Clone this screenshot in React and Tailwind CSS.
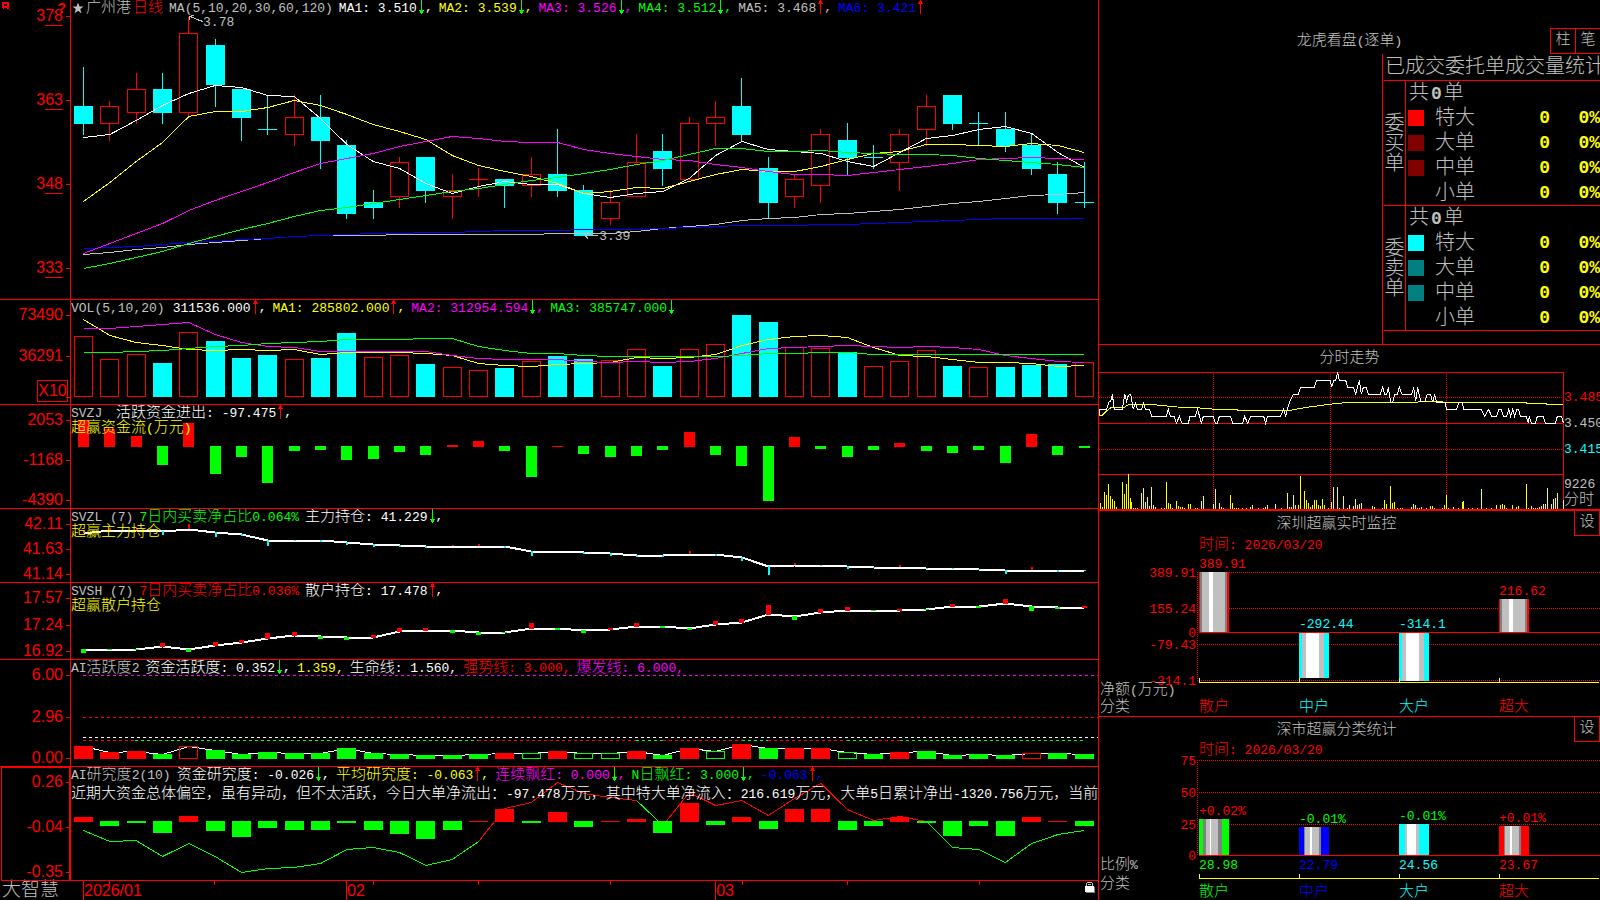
import { clsx } from 'clsx';

const RED = '#ff0000';
const GREEN = '#00ff00';
const CYAN = '#00ffff';
const YELLOW = '#ffff00';
const MAGENTA = '#ff00ff';
const BLUE = '#0000ff';
const SILVER = '#c0c0c0';
const GRAY = '#808080';
const WHITE = '#ffffff';

const colX = (i) => 83.5 + (i * 1000.5) / 38;
const colLeft = (i, w) => Math.floor(colX(i)) - (w - 1) / 2;

// [kind, high, low, body top, body bottom]; c = down day, r = up day
const CANDLES = [
  ['c', 67, 135, 106, 124], ['r', 101, 141, 106, 124], ['r', 73, 124, 89, 113], ['c', 73, 124, 89, 113],
  ['r', 17, 118, 33, 113], ['c', 39, 107, 45, 85], ['c', 89, 141, 89, 118], ['c', 95, 135, 129, 130],
  ['r', 95, 146, 117, 135], ['c', 95, 169, 117, 141], ['c', 140, 219, 145, 214], ['c', 190, 219, 202, 208],
  ['r', 157, 208, 162, 197], ['c', 157, 203, 157, 191], ['r', 174, 219, 190, 197], ['r', 168, 197, 179, 180],
  ['c', 179, 208, 179, 186], ['r', 157, 197, 174, 186], ['c', 129, 197, 174, 191], ['c', 185, 236, 190, 236],
  ['r', 190, 225, 202, 219], ['r', 134, 197, 162, 197], ['c', 134, 186, 151, 169], ['r', 117, 180, 123, 180],
  ['r', 101, 146, 117, 124], ['c', 78, 141, 106, 135], ['c', 157, 219, 168, 203], ['r', 174, 208, 179, 197],
  ['r', 129, 203, 134, 186], ['c', 123, 175, 140, 158], ['c', 145, 169, 157, 158], ['r', 129, 191, 134, 163],
  ['r', 95, 146, 106, 130], ['c', 95, 130, 95, 124], ['c', 112, 146, 123, 124], ['c', 112, 152, 129, 146],
  ['c', 134, 175, 145, 169], ['c', 162, 214, 174, 203], ['c', 162, 208, 202, 203],
];

const MA5 = [137, 134, 120, 105, 93, 85, 87, 95, 96, 118, 144, 161, 168, 183, 193, 186, 181, 184, 184, 193, 197, 193, 191, 178, 155, 141, 149, 151, 153, 161, 166, 152, 138, 135, 129, 126, 133, 152, 167];
const MA10 = [201, 182, 161, 142, 116, 111, 111, 107, 100, 105, 114, 124, 131, 139, 155, 165, 171, 176, 183, 193, 191, 187, 188, 181, 174, 169, 171, 171, 166, 159, 153, 151, 144, 144, 145, 146, 143, 145, 152];
const MA20 = [253, 243, 233, 223, 210, 200, 191, 182, 172, 163, 158, 153, 146, 141, 136, 138, 141, 142, 142, 149, 153, 156, 159, 160, 164, 167, 171, 174, 174, 175, 172, 169, 166, 163, 159, 158, 157, 158, 159];
const MA30 = [268, 263, 257, 251, 243, 236, 229, 223, 216, 210, 207, 203, 199, 195, 191, 188, 184, 180, 177, 173, 169, 164, 160, 154, 148, 148, 151, 151, 150, 152, 153, 154, 154, 155, 158, 160, 162, 164, 167];
const MA60 = [254, 252, 249, 247, 244, 242, 240, 238, 236, 235, 235, 235, 234, 234, 234, 234, 234, 234, 233, 233, 233, 231, 228, 226, 224, 220, 218, 217, 214, 213, 211, 209, 206, 203, 201, 198, 195, 194, 192];
const MA120 = [248, 247, 246, 244, 242, 241, 239, 238, 236, 235, 234, 233, 233, 232, 232, 231, 230, 230, 230, 229, 229, 229, 228, 227, 226, 225, 225, 225, 224, 224, 223, 222, 221, 220, 219, 218, 218, 218, 218];

const VOL_KIND = 'rrrcrcccrccrrcrrcrccrrcrrccrrcrrrcrcccr';
const VOL_TOP = [336, 359, 354, 363, 332, 341, 358, 355, 359, 358, 333, 357, 355, 364, 367, 370, 368, 361, 356, 359, 360, 349, 366, 349, 344, 315, 322, 347, 348, 352, 366, 361, 350, 366, 367, 367, 365, 364, 362];
const VOL_MA1 = [319, 335, 342, 345, 349, 350, 349, 350, 349, 354, 352, 352, 352, 353, 355, 363, 365, 366, 364, 363, 362, 357, 358, 357, 354, 345, 339, 336, 335, 337, 347, 355, 356, 359, 362, 362, 363, 366, 365];
const VOL_MA2 = [328, 328, 326, 324, 322, 334, 342, 346, 347, 351, 351, 351, 351, 351, 355, 358, 359, 359, 359, 361, 362, 361, 362, 361, 358, 353, 348, 347, 346, 345, 346, 347, 346, 347, 349, 355, 358, 361, 362];
const VOL_MA3 = [352, 352, 351, 350, 348, 346, 345, 343, 342, 341, 339, 339, 339, 338, 338, 346, 350, 353, 353, 355, 356, 356, 356, 356, 356, 355, 353, 353, 352, 352, 354, 354, 354, 354, 354, 354, 354, 354, 354];

const FLOW = [27, 18, 11, -19, 24, -28, -11, -37, -5, -4, -14, -13, -6, -9, 2, 6, -5, -31, 1, -8, -11, -10, -4, 15, -9, -20, -55, 10, -3, -11, -4, 4, -5, -7, -4, -17, 13, -9, -2];

const MAIN_POS = [533, 530, 530, 531, 529, 532, 534, 540, 540, 540, 542, 544, 545, 546, 546, 546, 546, 551, 551, 552, 553, 555, 555, 554, 554, 557, 566, 565, 565, 566, 567, 567, 568, 568, 569, 570, 570, 570, 570];
const MAIN_MARK = [3, 2, 2, -4, 5, -5, -2, -6, -1, -2, -3, -3, -2, -2, 1, 2, -2, -5, 0, -2, -3, -2, -2, 3, -2, -4, -9, 2, -1, -3, -1, 2, -1, -1, -1, -4, 3, -2, -1];

const RETAIL_POS = [649, 649, 649, 646, 649, 645, 642, 638, 635, 636, 637, 637, 631, 630, 630, 632, 632, 628, 628, 630, 629, 626, 626, 628, 624, 622, 614, 616, 612, 610, 610, 610, 609, 606, 606, 603, 606, 607, 607];
const RETAIL_MARK = [-4, -1, -1, 4, -3, 4, 3, 6, 4, -3, -3, 3, 4, 3, -3, -3, -1, 6, -2, -3, 2, 4, -2, -2, 4, 4, 10, -4, 4, 4, -1, 2, -1, 3, -2, 5, -5, -2, 2];

// upper case = outlined bar
const ACTIVE_BARS = [
  ['r', 746], ['r', 752], ['r', 751], ['g', 754], ['R', 746], ['g', 750], ['g', 754], ['g', 752], ['g', 753], ['g', 753],
  ['g', 748], ['g', 753], ['g', 754], ['g', 755], ['g', 755], ['g', 754], ['r', 753], ['G', 753], ['r', 751], ['G', 753],
  ['G', 753], ['r', 751], ['g', 755], ['r', 748], ['G', 751], ['r', 744], ['g', 748], ['r', 748], ['r', 748], ['G', 752],
  ['g', 754], ['r', 752], ['g', 751], ['g', 755], ['g', 754], ['g', 755], ['R', 753], ['g', 753], ['g', 754],
];
const ACTIVE_DASHES = [
  [83, 135, RED], [135, 478, GREEN], [478, 636, RED], [636, 663, GREEN], [663, 742, RED], [742, 768, GREEN],
  [768, 847, RED], [847, 873, GREEN], [873, 900, RED], [900, 1083, GREEN],
];

const STUDY = [5, -5, -2, -12, 6, -10, -16, -7, -9, -9, -2, -9, -13, -18, -9, 1, 13, -2, 10, -6, 1, 3, -12, 19, -4, 5, -8, 13, 13, -9, -5, 5, -2, -15, -5, -15, 5, 1, -5];
const STUDY_LINE = [830, 841, 840, 856, 843, 856, 872, 868, 867, 863, 849, 847, 852, 865, 859, 841, 808, 802, 782, 793, 797, 800, 825, 792, 805, 800, 815, 798, 783, 809, 820, 816, 821, 847, 849, 862, 843, 834, 830];
const STUDY_SEGMENTS = [[0, 15, GREEN], [15, 21, RED], [21, 22, GREEN], [22, 32, RED], [32, 38, GREEN]];

// intraday chart, three units to the pixel
const PRICE = '28,226 30,208 50,208 56,187 62,184 67,163 73,208 97,208 104,163 110,184 115,166 122,163 130,208 136,190 143,208 155,208 161,190 166,208 178,208 185,229 229,229 235,208 241,229 253,229 259,250 268,229 276,250 295,250 300,229 316,229 323,208 334,250 340,229 370,229 376,250 382,250 388,229 421,229 428,250 458,250 464,229 473,250 482,229 521,229 527,250 532,229 572,229 580,208 587,229 598,187 610,163 625,163 632,142 673,142 680,121 721,121 725,142 731,121 737,121 743,97 748,121 767,121 773,142 790,142 797,163 808,121 814,163 820,142 829,142 835,163 871,163 878,142 884,163 890,163 895,142 902,187 908,187 914,163 922,163 928,142 936,163 965,163 971,142 977,184 983,142 992,184 1005,184 1012,163 1022,163 1028,187 1034,163 1040,187 1065,187 1070,208 1100,208 1106,187 1117,187 1121,208 1173,208 1184,229 1196,208 1205,229 1220,229 1226,208 1234,208 1240,229 1250,229 1256,208 1262,229 1268,208 1274,229 1280,208 1286,208 1291,229 1309,229 1315,250 1318,229 1324,250 1336,250 1342,229 1360,229 1366,250 1396,250 1402,229 1415,229 1420,248';
const AVERAGE = '28,226 38,225 52,211 64,202 103,202 116,193 180,193 262,201 330,204 376,208 475,211 600,211 650,202 740,190 790,187 980,187 990,184 1050,185 1070,187 1305,187 1312,190 1365,190 1372,193 1420,193';
const TICKS = [
  [31, 489], [37, 501], [43, 456], [49, 465], [55, 432], [61, 468], [67, 477], [73, 483], [79, 501], [97, 426], [103, 462], [109, 432],
  [115, 402], [121, 474], [124, 486], [130, 504], [136, 504], [142, 504], [154, 459], [160, 444], [166, 486], [172, 471], [178, 498],
  [184, 441], [190, 495], [196, 501], [214, 504], [223, 504], [229, 426], [235, 489], [241, 492], [247, 504], [259, 483], [265, 498],
  [271, 501], [277, 501], [283, 504], [295, 492], [301, 492], [316, 504], [322, 504], [334, 483], [340, 468], [370, 492], [376, 447],
  [388, 489], [394, 501], [400, 504], [421, 465], [427, 489], [433, 504], [439, 504], [445, 504], [457, 504], [469, 504], [481, 501],
  [487, 495], [505, 504], [520, 504], [526, 501], [532, 495], [556, 492], [574, 504], [592, 459], [598, 501], [604, 501], [610, 465],
  [616, 495], [625, 495], [631, 408], [643, 453], [649, 480], [655, 489], [661, 501], [667, 495], [673, 480], [679, 480], [685, 495],
  [691, 498], [697, 477], [703, 495], [715, 504], [724, 486], [730, 441], [742, 441], [748, 504], [760, 468], [772, 504], [778, 495],
  [790, 498], [796, 477], [802, 495], [808, 492], [814, 489], [847, 498], [853, 501], [877, 504], [883, 480], [889, 492], [901, 438],
  [907, 489], [913, 486], [922, 504], [931, 504], [937, 504], [964, 501], [970, 492], [976, 495], [982, 504], [988, 504], [994, 501],
  [1009, 504], [1021, 498], [1027, 498], [1033, 504], [1057, 504], [1063, 495], [1069, 465], [1075, 504], [1090, 501], [1105, 504],
  [1117, 486], [1120, 483], [1135, 504], [1147, 504], [1162, 504], [1174, 447], [1190, 504], [1205, 504], [1219, 495], [1231, 495],
  [1237, 492], [1243, 495], [1249, 504], [1267, 495], [1279, 501], [1285, 498], [1309, 432], [1315, 504], [1324, 498], [1330, 504],
  [1336, 504], [1342, 504], [1348, 501], [1354, 498], [1360, 492], [1366, 492], [1372, 444], [1384, 492], [1390, 477], [1396, 474],
  [1402, 459], [1420, 480],
];

const runs = (text) => text.match(/[\x20-\x7e]+|[^\x20-\x7e]+/g) || [];
const isLatin = (s) => s.charCodeAt(0) < 127;

// Latin runs are set smaller than the Chinese ones so that they stay half width
function Mixed({ children }) {
  return runs(children).map((s, i) => (
    <span key={i} className={isLatin(s) ? 'text-[13px]' : 'text-[15px]'}>{s}</span>
  ));
}

function ChartText({ x, y, fill, anchor, children }) {
  return (
    <text x={x} y={y} fill={fill} textAnchor={anchor}>
      {runs(children).map((s, i) => (
        <tspan key={i} className={isLatin(s) ? 'text-[13px]' : 'text-[15px]'}>{s}</tspan>
      ))}
    </text>
  );
}

function Arrow({ up }) {
  return (
    <svg viewBox="0 0 8 14" className="w-2 h-3.5 shrink-0" shapeRendering="crispEdges" aria-hidden="true">
      {up ? (
        <path d="M4 0h1v14h-1zM3 1h3v2h-3zM2 3h5v1h-5z" fill={RED} />
      ) : (
        <path d="M4 0h1v14h-1zM3 11h3v2h-3zM2 10h5v1h-5z" fill={GREEN} />
      )}
    </svg>
  );
}

function Star() {
  return (
    <svg viewBox="0 0 24 24" className="w-3 h-3 mt-0.5 ml-px shrink-0" fill={SILVER} aria-hidden="true">
      <path d="M12 1l3 8h8l-6.500 5l2.500 9l-7-5.500l-7 5.500l2.500-9l-6.500-5h8z" />
    </svg>
  );
}

function Legend({ items, icon }) {
  return (
    <div className="flex gap-1.5 h-[15px] leading-4 whitespace-pre">
      {items.map(([text, tone, dir, tail = ','], i) => (
        <span key={i} className={clsx('flex shrink-0', tone)}>
          {i === 0 && icon}
          <span><Mixed>{text}</Mixed></span>
          {dir && <Arrow up={dir === 'up'} />}
          {dir && tail && <Mixed>{tail}</Mixed>}
        </span>
      ))}
    </div>
  );
}

function Axis({ labels, className, split, children }) {
  return (
    <div className={clsx('relative w-[71px] shrink-0 border-r border-[#ff0000] flex flex-col justify-between text-base text-[#ff0000]', className)}>
      {labels.map((l, i) => (
        <div key={i} className="relative h-3 leading-3 pr-[7px] text-right">
          {split ? (
            <>{l[0]}<span className="border-b border-[#ff0000] pb-px">{l.slice(1)}</span></>
          ) : l}
          <span className="absolute right-0 top-1/2 w-1 h-px bg-[#ff0000]" />
        </div>
      ))}
      {children}
    </div>
  );
}

function Plot({ top, height, overlay, className, children }) {
  return (
    <div className={clsx('relative flex-1 min-w-0 overflow-hidden', className)}>
      <svg
        className="absolute inset-0 w-full h-full"
        viewBox={`71 ${top} 1027 ${height}`}
        preserveAspectRatio="none"
        shapeRendering="crispEdges"
        fill="none"
      >
        {children}
      </svg>
      <div className="relative">{overlay}</div>
    </div>
  );
}

function Line({ data, color, width = 1, from = 0 }) {
  const points = data.map((y, i) => `${colX(i + from)},${y + 0.5}`).join(' ');
  return <polyline points={points} stroke={color} strokeWidth={width} />;
}

function Bar({ x, y, w, h, color, outline }) {
  return outline ? (
    <rect x={x + 0.5} y={y + 0.5} width={w - 1} height={Math.max(h - 1, 0)} stroke={color} />
  ) : (
    <rect x={x} y={y} width={w} height={h} fill={color} />
  );
}

function SignedBars({ data, zero, w, up, down }) {
  return data.map((v, i) => (
    <Bar
      key={i}
      x={colLeft(i, w)}
      y={v > 0 ? zero + 1 - v : zero}
      w={w}
      h={Math.abs(v)}
      color={v > 0 ? up : down}
    />
  ));
}

function Candle({ i, data: [kind, high, low, top, bottom] }) {
  const color = kind === 'c' ? CYAN : RED;
  const x = colLeft(i, 1);
  return (
    <g>
      <rect x={x} y={high} width={1} height={top - high} fill={color} />
      <rect x={x} y={bottom} width={1} height={low - bottom} fill={color} />
      <Bar x={x - 9} y={top} w={19} h={bottom - top} color={color} outline={kind === 'r' && bottom - top > 1} />
    </g>
  );
}

function MainPanel() {
  return (
    <section className="flex border-b border-[#ff0000] min-h-0">
      <Axis labels={['378', '363', '348', '333']} className="pt-[10px] pb-[25px]" split>
        <svg viewBox="0 0 8 8" className="absolute left-0.5 top-0.5 size-2" fill={RED} shapeRendering="crispEdges" aria-hidden="true">
          <path d="M0 0h7v6h-7zM2 2v2h3v-2zM1 6h1v1h-1zM5 6h2v1h-2zM7 7h1v1h-1z" fillRule="evenodd" />
        </svg>
        <b className="absolute right-1 top-0.5 text-sm leading-3 font-bold">?</b>
      </Axis>
      <Plot
        top={0}
        height={299}
        overlay={
          <Legend
            icon={<Star />}
            items={[
              ['广州港', 'gap-0.5 text-[#c0c0c0] -mr-1'],
              ['日线', 'text-[#ff0000]'],
              ['MA(5,10,20,30,60,120)', 'text-[#c0c0c0]'],
              ['MA1: 3.510', 'text-white', 'down'],
              ['MA2: 3.539', 'text-[#ffff00]', 'down'],
              ['MA3: 3.526', 'text-[#ff00ff]', 'down'],
              ['MA4: 3.512', 'text-[#00ff00]', 'down'],
              ['MA5: 3.468', 'text-[#c0c0c0]', 'up'],
              ['MA6: 3.421', 'text-[#0000ff]', 'up', ''],
            ]}
          />
        }
      >
        {CANDLES.map((c, i) => <Candle key={i} i={i} data={c} />)}
        <Line data={MA60} color={SILVER} />
        <Line data={MA120} color={BLUE} />
        <Line data={MA5} color={WHITE} />
        <Line data={MA10} color={YELLOW} />
        <Line data={MA20} color={MAGENTA} />
        <Line data={MA30} color={GREEN} />
        <path d="M189 16.5l4 1l4 2l6 2M189 16.5l1 4M189 16.5l5 -1" stroke={SILVER} />
        <ChartText x={203} y={26} fill={SILVER}>3.78</ChartText>
        <path d="M585 235.5h13M585 235.5l3 -3M585 235.5l3 3" stroke={SILVER} />
        <ChartText x={599} y={240} fill={SILVER}>3.39</ChartText>
      </Plot>
    </section>
  );
}

function VolumePanel() {
  return (
    <section className="flex border-b border-[#ff0000] min-h-0">
      <Axis labels={['73490', '36291', '']} className="pt-[9px] pb-px">
        <span className="absolute right-0.5 bottom-0.5 w-[31px] h-[22px] border border-[#ff0000] leading-5 text-center">X10</span>
      </Axis>
      <Plot
        top={300}
        height={104}
        overlay={
          <Legend
            items={[
              ['VOL(5,10,20)', 'text-[#c0c0c0] mr-0.5'],
              ['311536.000', 'text-white', 'up'],
              ['MA1: 285802.000', 'text-[#ffff00]', 'up'],
              ['MA2: 312954.594', 'text-[#ff00ff]', 'down'],
              ['MA3: 385747.000', 'text-[#00ff00]', 'down', ''],
            ]}
          />
        }
      >
        {VOL_TOP.map((y, i) => (
          <Bar
            key={i}
            x={colLeft(i, 19)}
            y={y}
            w={19}
            h={397 - y}
            color={VOL_KIND[i] === 'c' ? CYAN : RED}
            outline={VOL_KIND[i] === 'r'}
          />
        ))}
        <Line data={VOL_MA1} color={YELLOW} />
        <Line data={VOL_MA2} color={MAGENTA} />
        <Line data={VOL_MA3} color={GREEN} />
      </Plot>
    </section>
  );
}

function FlowPanel() {
  return (
    <section className="flex border-b border-[#ff0000] min-h-0">
      <Axis labels={['2053', '-1168', '-4390']} className="pt-[9px] pb-0.5" />
      <Plot
        top={405}
        height={103}
        overlay={
          <>
            <Legend
              items={[
                ['SVZJ ', 'text-[#c0c0c0]'],
                ['活跃资金进出: -97.475', 'text-white', 'up'],
              ]}
            />
            <p className="leading-4 text-[#ffff00]"><Mixed>超赢资金流(万元)</Mixed></p>
          </>
        }
      >
        <SignedBars data={FLOW} zero={446} w={11} up={RED} down={GREEN} />
      </Plot>
    </section>
  );
}

function MainHoldingPanel() {
  return (
    <section className="flex border-b border-[#ff0000] min-h-0">
      <Axis labels={['42.11', '41.63', '41.14']} className="pt-[9px] pb-0.5" />
      <Plot
        top={509}
        height={73}
        overlay={
          <>
            <Legend
              items={[
                ['SVZL (7)', 'text-[#c0c0c0]'],
                ['7日内买卖净占比0.064%', 'text-[#00ff00]'],
                ['主力持仓: 41.229', 'text-white', 'down'],
              ]}
            />
            <p className="leading-4 text-[#ffff00]"><Mixed>超赢主力持仓</Mixed></p>
          </>
        }
      >
        <Line data={MAIN_POS} color={WHITE} width={2} />
        {MAIN_MARK.map((v, i) => (
          <rect
            key={i}
            x={colLeft(i, 1)}
            y={v > 0 ? MAIN_POS[i] - v : MAIN_POS[i]}
            width={2}
            height={Math.abs(v)}
            fill={v > 0 ? RED : CYAN}
          />
        ))}
      </Plot>
    </section>
  );
}

function RetailHoldingPanel() {
  return (
    <section className="flex border-b border-[#ff0000] min-h-0">
      <Axis labels={['17.57', '17.24', '16.92']} className="pt-[9px] pb-0.5" />
      <Plot
        top={583}
        height={76}
        overlay={
          <>
            <Legend
              items={[
                ['SVSH (7)', 'text-[#c0c0c0]'],
                ['7日内买卖净占比0.036%', 'text-[#ff0000]'],
                ['散户持仓: 17.478', 'text-white', 'up'],
              ]}
            />
            <p className="leading-4 text-[#ffff00]"><Mixed>超赢散户持仓</Mixed></p>
          </>
        }
      >
        <Line data={RETAIL_POS} color={WHITE} width={2} />
        {RETAIL_MARK.map((v, i) => (
          <rect
            key={i}
            x={colLeft(i, 5)}
            y={v > 0 ? RETAIL_POS[i] + 1 - v : RETAIL_POS[i]}
            width={5}
            height={Math.abs(v)}
            fill={v > 0 ? RED : GREEN}
          />
        ))}
      </Plot>
    </section>
  );
}

function ActivityPanel() {
  return (
    <section className="flex border-b border-[#ff0000] min-h-0">
      <Axis labels={['6.00', '2.96', '0.00']} className="pt-[9px] pb-0.5" />
      <Plot
        top={660}
        height={106}
        overlay={
          <Legend
            items={[
              ['AI活跃度2', 'text-[#c0c0c0]'],
              ['资金活跃度: 0.352', 'text-white', 'down'],
              ['1.359,', 'text-[#ffff00]'],
              ['生命线: 1.560,', 'text-white'],
              ['强势线: 3.000,', 'text-[#ff0000]'],
              ['爆发线: 6.000,', 'text-[#ff00ff]'],
            ]}
          />
        }
      >
        <path d="M83 675.5H1098" stroke={MAGENTA} strokeDasharray="3 3" />
        <path d="M83 717.5H1098" stroke={RED} strokeDasharray="3 3" />
        <path d="M83 737.5H1098" stroke={WHITE} strokeDasharray="3 3" />
        {ACTIVE_DASHES.map(([a, b, color]) => (
          <path key={a} d={`M${a} 740.5H${b}`} stroke={color} strokeDasharray="3 3" />
        ))}
        <Line data={ACTIVE_BARS.map((b) => b[1])} color={WHITE} />
        {ACTIVE_BARS.map(([kind, y], i) => {
          const outline = kind === kind.toUpperCase();
          const color = kind.toLowerCase() === 'r' ? RED : GREEN;
          return <Bar key={i} x={colLeft(i, 19)} y={y} w={19} h={759 - y} color={color} outline={outline} />;
        })}
      </Plot>
    </section>
  );
}

function StudyPanel() {
  return (
    <section className="flex min-h-0">
      <Axis labels={['0.26', '-0.04', '-0.35']} className="pt-[9px] pb-[3px]">
        <span className="absolute inset-y-0 left-px right-0 border border-[#ff0000]" />
      </Axis>
      <Plot
        top={767}
        height={113}
        className="border-b border-[#ff0000]"
        overlay={
          <>
            <Legend
              items={[
                ['AI研究度2(10)', 'text-[#c0c0c0]'],
                ['资金研究度: -0.026', 'text-white', 'down'],
                ['平均研究度: -0.063', 'text-[#ffff00]', 'up'],
                ['连续飘红: 0.000', 'text-[#ff00ff]', 'down'],
                ['N日飘红: 3.000', 'text-[#00ff00]', 'down'],
                ['-0.063', 'text-[#0000ff]', 'up'],
              ]}
            />
            <p className="mt-1 leading-4 whitespace-nowrap text-white">
              <Mixed>近期大资金总体偏空，虽有异动，但不太活跃，今日大单净流出：-97.478万元，其中特大单净流入：216.619万元，大单5日累计净出-1320.756万元，当前</Mixed>
            </p>
          </>
        }
      >
        {STUDY_SEGMENTS.map(([a, b, color]) => (
          <Line key={a} data={STUDY_LINE.slice(a, b + 1)} from={a} color={color} />
        ))}
        <SignedBars data={STUDY} zero={821} w={19} up={RED} down={GREEN} />
      </Plot>
    </section>
  );
}

function DateAxis() {
  return (
    <footer className="flex min-h-0">
      <div className="w-[71px] shrink-0 pl-0.5 text-[19px] leading-5 whitespace-nowrap text-[#c0c0c0]">大智慧</div>
      <div className="relative flex-1 min-w-0">
        <svg className="absolute inset-0 w-full h-full" viewBox="71 881 1027 19" preserveAspectRatio="none" shapeRendering="crispEdges">
          {[83, 346, 715].map((x) => <rect key={x} x={x} y={881} width={1} height={19} fill={RED} />)}
          {[109, 214, 373, 478, 610, 742, 847, 979].map((x) => <rect key={x} x={x} y={881} width={1} height={4} fill={RED} />)}
          <g className="font-['Liberation_Sans'] text-base" fill={RED}>
            <text x={84} y={896}>2026/01</text>
            <text x={347} y={896}>02</text>
            <text x={716} y={896}>03</text>
          </g>
          <path d="M1087 882h5v1h-5zM1086 883h1v3h-1zM1092 883h1v3h-1zM1088 884h3v1h-3z" fill={SILVER} />
          <path d="M1086 892h9v1h-9zM1094 887h1v6h-1z" fill={GRAY} />
          <path d="M1085 886h9v6h-9z" fill={WHITE} />
        </svg>
      </div>
    </footer>
  );
}

const ORDER_SIDES = [
  { name: '委买单', swatches: ['bg-[#ff0000]', 'bg-[#800000]', 'bg-[#800000]', ''] },
  { name: '委卖单', swatches: ['bg-[#00ffff]', 'bg-[#008080]', 'bg-[#008080]', ''] },
];
const ORDER_SIZES = ['特大', '大单', '中单', '小单'];

function OrderTable() {
  return (
    <table className="w-full border-separate border-spacing-0 border-b border-[#ff0000] text-xl text-[#c0c0c0]">
      {ORDER_SIDES.map((side) => (
        <tbody key={side.name}>
          <tr className="h-[25px] leading-5">
            <th rowSpan={5} scope="rowgroup" className="w-[22px] border-t border-r border-[#ff0000] p-0 pt-1 font-light align-middle">
              {side.name.split('').map((c) => <span key={c} className="block">{c}</span>)}
            </th>
            <td colSpan={4} className="border-t border-[#ff0000] p-0 pt-0.5 pl-[3px]">
              共<b className="px-0.5 text-lg leading-5 font-bold">0</b>单
            </td>
          </tr>
          {ORDER_SIZES.map((size, i) => (
            <tr key={size} className="h-[25px] leading-5">
              <td className="w-[29px] p-0 pl-0.5"><span className={clsx('block size-4', side.swatches[i])} /></td>
              <td className="p-0 pt-0.5 whitespace-nowrap">{size}</td>
              <td className="p-0 text-right text-lg leading-5 font-bold text-[#ffff00]">0</td>
              <td className="w-[50px] p-0 text-right text-lg leading-5 font-bold text-[#ffff00]">0%</td>
            </tr>
          ))}
        </tbody>
      ))}
    </table>
  );
}

function OrderPanel() {
  return (
    <section className="flex flex-col border-b border-[#ff0000] min-h-0 text-[#c0c0c0]">
      <header className="grid grid-cols-[1fr_auto_1fr] pt-7">
        <h2 className="col-start-2 h-[26px] leading-[26px]"><Mixed>龙虎看盘(逐单)</Mixed></h2>
        <div className="flex h-[26px] justify-self-end border border-r-0 border-[#ff0000] text-[15px] leading-6">
          <button type="button" className="w-[25px] border-r border-[#ff0000]">柱</button>
          <button type="button" className="w-6">笔</button>
        </div>
      </header>
      <div className="flex-1 w-[218px] ml-auto border-l border-[#ff0000] pl-px overflow-hidden">
        <h3 className="pl-px h-[26px] text-xl leading-7 whitespace-nowrap">已成交委托单成交量统计</h3>
        <OrderTable />
      </div>
    </section>
  );
}

function IntradayPanel() {
  return (
    <section className="flex flex-col border-b-2 border-[#ff0000] min-h-0">
      <h2 className="h-[27px] leading-7 text-center text-[15px] text-[#c0c0c0]">分时走势</h2>
      <div className="flex flex-1 min-h-0">
        <div className="relative flex-1 min-w-0">
          <svg className="absolute inset-0 w-full h-full" viewBox="27 96 1395 411" preserveAspectRatio="none" shapeRendering="crispEdges" fill="none" strokeWidth={3}>
            <path d="M27 97.5H1422M27 250.5H1422M27 403.5H1422M1420.5 96V507" stroke={RED} />
            <path d="M27 172.5H1422M27 328.5H1422M370.5 96V507M721.5 96V507M1069.5 96V507" stroke={RED} strokeDasharray="3 3" />
            {TICKS.map(([x, y]) => <rect key={x} x={x - 1} y={y} width={3} height={507 - y} fill={YELLOW} />)}
            <polyline points={AVERAGE} stroke={YELLOW} />
            <polyline points={PRICE} stroke={WHITE} />
          </svg>
        </div>
        <div className="flex flex-col w-9 shrink-0 overflow-hidden pt-[18px] leading-4 whitespace-nowrap">
          <div className="flex flex-col gap-[10px]">
            <span className="text-[13px] text-[#ff0000]">3.485</span>
            <span className="text-[13px] text-[#c0c0c0]">3.450</span>
            <span className="text-[13px] text-[#00ffff]">3.415</span>
          </div>
          <div className="mt-auto flex flex-col text-[#c0c0c0]">
            <span className="text-[13px]">9226</span>
            <span className="text-[15px]">分时</span>
          </div>
        </div>
      </div>
    </section>
  );
}

function StatHeader({ title }) {
  return (
    <header className="flex h-[25px] shrink-0 text-[15px] text-[#c0c0c0]">
      <h2 className="flex-1 text-center leading-7">{title}</h2>
      <button type="button" className="w-[26px] border border-t-0 border-[#ff0000] leading-6">设</button>
    </header>
  );
}

// stripes: [width, color] from left to right, 30 in all
function Cylinder({ x, y, h, stripes }) {
  return stripes.map(([w, color], i) => {
    const left = stripes.slice(0, i).reduce((sum, s) => sum + s[0], x);
    return <rect key={i} x={left} y={y} width={w} height={h} fill={color} />;
  });
}

const WIDE = (edge) => [[1, edge], [2, GRAY], [7, SILVER], [4, WHITE], [12, SILVER], [2, GRAY], [2, edge]];
const CYAN_WIDE = [[3, CYAN], [4, SILVER], [13, WHITE], [5, SILVER], [5, CYAN]];
const NARROW = (edge) => [[5, edge], [1, GRAY], [5, SILVER], [2, WHITE], [7, SILVER], [2, GRAY], [8, edge]];

function NetPanel() {
  return (
    <section className="flex flex-col border-b border-[#ff0000] min-h-0">
      <StatHeader title="深圳超赢实时监控" />
      <div className="relative flex-1">
        <svg className="absolute inset-0 w-full h-full" viewBox="1099 536 501 180" preserveAspectRatio="none" shapeRendering="crispEdges">
          <ChartText x={1199} y={549} fill={RED}>时间: 2026/03/20</ChartText>
          <path d="M1197 572.5H1600M1197 608.5H1600M1197 644.5H1600M1197 680.5H1600M1197.5 572V680" stroke={RED} strokeDasharray="1 1" />
          <rect x={1199} y={632} width={401} height={1} fill={RED} />
          {[['389.91', 577], ['155.24', 613], ['0', 637], ['-79.43', 649], ['-314.1', 685]].map(([t, y]) => (
            <ChartText key={t} x={1196} y={y} fill={RED} anchor="end">{t}</ChartText>
          ))}
          <Cylinder x={1199} y={572} h={60} stripes={WIDE(RED)} />
          <Cylinder x={1299} y={633} h={45} stripes={CYAN_WIDE} />
          <Cylinder x={1399} y={633} h={48} stripes={CYAN_WIDE} />
          <Cylinder x={1499} y={599} h={33} stripes={WIDE(RED)} />
          <ChartText x={1199} y={568} fill={RED}>389.91</ChartText>
          <ChartText x={1299} y={628} fill={CYAN}>-292.44</ChartText>
          <ChartText x={1399} y={628} fill={CYAN}>-314.1</ChartText>
          <ChartText x={1499} y={595} fill={RED}>216.62</ChartText>
          <path d="M1199 682h400v1h-400zM1199 678h1v4h-1zM1299 678h1v4h-1zM1399 678h1v4h-1zM1499 678h1v4h-1z" fill={YELLOW} />
          <ChartText x={1100} y={694} fill={SILVER}>净额(万元)</ChartText>
          <ChartText x={1100} y={711} fill={SILVER}>分类</ChartText>
          <ChartText x={1199} y={711} fill={RED}>散户</ChartText>
          <ChartText x={1299} y={711} fill={CYAN}>中户</ChartText>
          <ChartText x={1399} y={711} fill={CYAN}>大户</ChartText>
          <ChartText x={1499} y={711} fill={RED}>超大</ChartText>
        </svg>
      </div>
    </section>
  );
}

function RatioPanel() {
  return (
    <section className="flex flex-col min-h-0">
      <StatHeader title="深市超赢分类统计" />
      <div className="relative flex-1">
        <svg className="absolute inset-0 w-full h-full" viewBox="1099 742 501 158" preserveAspectRatio="none" shapeRendering="crispEdges">
          <ChartText x={1199} y={754} fill={RED}>时间: 2026/03/20</ChartText>
          <path d="M1197 760.5H1600M1197 792.5H1600M1197 824.5H1600M1197.5 760V855" stroke={RED} strokeDasharray="1 1" />
          {[['75', 765], ['50', 797], ['25', 829], ['0', 860]].map(([t, y]) => (
            <ChartText key={t} x={1196} y={y} fill={RED} anchor="end">{t}</ChartText>
          ))}
          <Cylinder
            x={1199}
            y={819}
            h={36}
            stripes={[[4, GREEN], [3, GRAY], [4, SILVER], [1, WHITE], [7, SILVER], [4, GRAY], [7, GREEN]]}
          />
          <Cylinder x={1299} y={827} h={28} stripes={NARROW(BLUE)} />
          <Cylinder x={1399} y={824} h={31} stripes={[[6, CYAN], [2, SILVER], [9, WHITE], [3, SILVER], [10, CYAN]]} />
          <Cylinder x={1499} y={826} h={29} stripes={NARROW(RED)} />
          <rect x={1199} y={855} width={401} height={1} fill={RED} />
          <ChartText x={1199} y={815} fill={RED}>+0.02%</ChartText>
          <ChartText x={1299} y={823} fill={GREEN}>-0.01%</ChartText>
          <ChartText x={1399} y={820} fill={GREEN}>-0.01%</ChartText>
          <ChartText x={1499} y={822} fill={RED}>+0.01%</ChartText>
          <path d="M1199 878h400v1h-400zM1199 874h1v4h-1zM1299 874h1v4h-1zM1399 874h1v4h-1zM1499 874h1v4h-1z" fill={YELLOW} />
          <ChartText x={1100} y={869} fill={SILVER}>比例%</ChartText>
          <ChartText x={1100} y={888} fill={SILVER}>分类</ChartText>
          {[[1199, '28.98', '散户', GREEN], [1299, '22.79', '中户', BLUE], [1399, '24.56', '大户', CYAN], [1499, '23.67', '超大', RED]].map(([x, value, name, color]) => (
            <g key={x}>
              <ChartText x={x} y={869} fill={color}>{value}</ChartText>
              <ChartText x={x} y={896} fill={color}>{name}</ChartText>
            </g>
          ))}
        </svg>
      </div>
    </section>
  );
}

export default function App() {
  return (
    <div className="flex h-screen min-h-[720px] overflow-hidden bg-black font-light font-['Liberation_Mono','Noto_Sans_CJK_SC',monospace]">
      <main className="grid flex-1 min-w-0 grid-rows-[300fr_105fr_104fr_74fr_77fr_107fr_114fr_19fr] [&_.text-base]:font-['Liberation_Sans']">
        <MainPanel />
        <VolumePanel />
        <FlowPanel />
        <MainHoldingPanel />
        <RetailHoldingPanel />
        <ActivityPanel />
        <StudyPanel />
        <DateAxis />
      </main>
      <aside className="grid w-[502px] shrink-0 grid-rows-[345fr_166fr_206fr_183fr] border-l border-[#ff0000]">
        <OrderPanel />
        <IntradayPanel />
        <NetPanel />
        <RatioPanel />
      </aside>
    </div>
  );
}
